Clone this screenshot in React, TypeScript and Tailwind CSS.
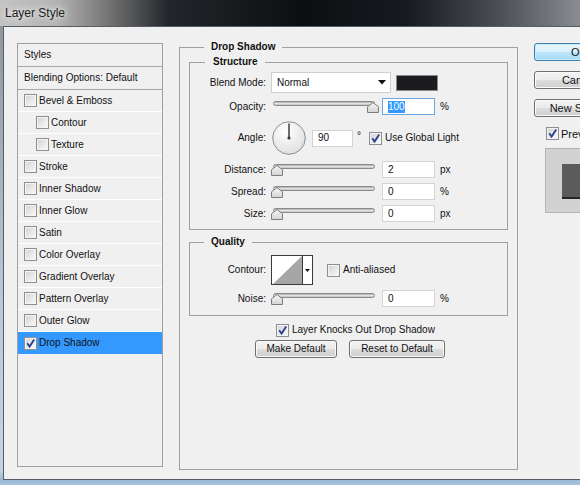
import React from "react";

function Check({ checked = false }: { checked?: boolean }) {
  return (
    <span className="relative flex h-[13px] w-[13px] shrink-0 items-center justify-center border border-[#8f8f8f] bg-gradient-to-br from-[#d2d2d2] to-[#fbfbfb] shadow-[inset_0_0_0_1px_#f4f4f4]">
      {checked && (
        <svg width="11" height="11" viewBox="0 0 11 11" className="absolute left-0 top-0">
          <path d="M2.2 5.2 L4.6 8.6 L9.2 1.6" fill="none" stroke="#2c428c" strokeWidth="1.9" />
        </svg>
      )}
    </span>
  );
}

function Field({ children, w, focused = false }: { children: React.ReactNode; w: string; focused?: boolean }) {
  return (
    <div
      className={`flex h-[17px] shrink-0 items-center border bg-white pl-[5px] ${
        focused ? "border-[#6fa6de]" : "border-[#d3d3d3]"
      } ${w}`}
    >
      {children}
    </div>
  );
}

function Slider({ max = false }: { max?: boolean }) {
  return (
    <div className="relative ml-[5px] h-[17px] w-[111px] shrink-0">
      <div className="absolute left-[2px] top-[3px] h-[5px] w-[102px] rounded-full border border-[#8b8b8b] bg-gradient-to-b from-[#a8a8a8] via-[#e3e3e3] to-[#c2c2c2]" />
      <svg
        width="12"
        height="11"
        viewBox="0 0 12 11"
        className={`absolute top-[4px] ${max ? "left-[96px]" : "left-0"}`}
      >
        <defs>
          <linearGradient id="thumbg" x1="0" y1="0" x2="0" y2="1">
            <stop offset="0" stopColor="#f6f6f6" />
            <stop offset="1" stopColor="#d4d4d4" />
          </linearGradient>
        </defs>
        <polygon points="6,0.5 11.5,4.8 11.5,10.5 0.5,10.5 0.5,4.8" fill="url(#thumbg)" stroke="#7d7d7d" />
      </svg>
    </div>
  );
}

function Label({ children }: { children: React.ReactNode }) {
  return <div className="w-[76px] shrink-0 text-right">{children}</div>;
}

function SliderRow({
  label,
  value,
  unit,
  max = false,
  focused = false,
  mt,
}: {
  label: string;
  value: string;
  unit: string;
  max?: boolean;
  focused?: boolean;
  mt: string;
}) {
  return (
    <div className={`flex h-[17px] items-center ${mt}`}>
      <Label>{label}</Label>
      <Slider max={max} />
      <Field w="w-[53px]" focused={focused}>
        {focused ? <span className="bg-[#3399ff] text-white">{value}</span> : value}
      </Field>
      <span className="ml-[5px]">{unit}</span>
    </div>
  );
}

function WinButton({ children, w, primary = false }: { children: React.ReactNode; w: string; primary?: boolean }) {
  return (
    <div
      className={`flex h-[18px] shrink-0 items-center justify-center rounded-[3px] border ${
        primary
          ? "border-[#3c7fb1] bg-[linear-gradient(to_bottom,#eaf6fd_0%,#d9f0fc_50%,#bee6fd_50%,#a7d9f5_100%)] shadow-[inset_0_0_0_1px_#c8ecfb]"
          : "border-[#707070] bg-[linear-gradient(to_bottom,#f2f2f2_0%,#ebebeb_50%,#dddddd_50%,#cfcfcf_100%)] shadow-[inset_0_0_0_1px_#fbfbfb]"
      } ${w}`}
    >
      {children}
    </div>
  );
}

const leftRows: { name: string; nested?: boolean; checked?: boolean; selected?: boolean }[] = [
  { name: "Bevel & Emboss" },
  { name: "Contour", nested: true },
  { name: "Texture", nested: true },
  { name: "Stroke" },
  { name: "Inner Shadow" },
  { name: "Inner Glow" },
  { name: "Satin" },
  { name: "Color Overlay" },
  { name: "Gradient Overlay" },
  { name: "Pattern Overlay" },
  { name: "Outer Glow" },
  { name: "Drop Shadow", checked: true, selected: true },
];

export default function App() {
  return (
    <div className="flex h-[485px] w-[580px] flex-col overflow-hidden bg-[linear-gradient(to_bottom,#8e9196_0px,#b9c9d9_300px,#c4d3e2_470px,#9cb8d6_480px,#a9c2dc_485px)] font-['Liberation_Sans',Arial,sans-serif] text-[10px] leading-[12px] text-[#111]">
      {/* Title bar */}
      <div className="flex h-[26px] shrink-0 items-center bg-[linear-gradient(to_right,#c4c4c4_0%,#b3b3b3_10%,#6a6a6a_20%,#22262a_29%,#0c0f12_52%,#161a1e_70%,#4b4f54_86%,#898c90_100%)] pl-[5px]">
        <span className="text-[12px] text-[#1b1b1b] [text-shadow:0_0_8px_#ffffff,0_0_4px_#e8e8e8]">Layer Style</span>
      </div>

      {/* Content */}
      <div className="ml-[3px] flex h-[454px] shrink-0 items-start overflow-hidden border border-r-0 border-[#575d66] bg-[#f0f0f0] pl-[13px]">
        {/* Left list */}
        <div className="mt-[16px] h-[424px] w-[146px] shrink-0 border border-[#a0a0a0] bg-[#f0f0f0]">
          <div className="flex h-[23px] items-center border-b border-[#a6a6a6] pl-[6px]">Styles</div>
          <div className="flex h-[23px] items-center border-b border-[#a6a6a6] pl-[6px]">Blending Options: Default</div>
          {leftRows.map((r) => (
            <div
              key={r.name}
              className={`flex h-[22px] items-center ${r.selected ? "bg-[#3399ff]" : "border-b border-white"} ${
                r.nested ? "pl-[18px]" : "pl-[6px]"
              }`}
            >
              <Check checked={r.checked} />
              <span className="ml-[2px]">{r.name}</span>
            </div>
          ))}
        </div>

        {/* Drop Shadow group */}
        <fieldset className="m-0 ml-[16px] mt-[14px] h-[429px] w-[339px] min-w-0 shrink-0 border border-[#a0a0a0] px-[9px] pb-0 pt-0">
          <legend className="ml-[15px] px-[7px] text-[10px] font-bold leading-[12px]">Drop Shadow</legend>

          {/* Structure */}
          <fieldset className="m-0 mt-[3px] min-w-0 border border-[#a0a0a0] px-0 pb-[7px] pt-[4px]">
            <legend className="ml-[15px] px-[8px] font-bold leading-[12px]">Structure</legend>

            <div className="flex h-[21px] items-center">
              <Label>Blend Mode:</Label>
              <div className="ml-[5px] flex h-[21px] w-[120px] shrink-0 items-center justify-between border border-[#cfcfcf] bg-white pl-[5px] pr-[4px]">
                <span>Normal</span>
                <svg width="8" height="5" viewBox="0 0 8 5">
                  <polygon points="0,0 8,0 4,4.5" fill="#111" />
                </svg>
              </div>
              <div className="ml-[5px] h-[16px] w-[42px] shrink-0 border border-[#8a8a8a] bg-[#1c1b20]" />
            </div>

            <SliderRow label="Opacity:" value="100" unit="%" max focused mt="mt-[5px]" />

            <div className="mt-[6px] flex h-[34px] items-center">
              <Label>Angle:</Label>
              <div className="ml-[6px] h-[34px] w-[34px] shrink-0">
                <svg width="34" height="34" viewBox="0 0 34 34">
                  <defs>
                    <radialGradient id="dialg" cx="0.4" cy="0.3" r="0.8">
                      <stop offset="0" stopColor="#ffffff" />
                      <stop offset="1" stopColor="#dcdcdc" />
                    </radialGradient>
                  </defs>
                  <circle cx="17" cy="17" r="16.3" fill="url(#dialg)" stroke="#8c8c8c" strokeWidth="1" />
                  <line x1="17" y1="17" x2="17" y2="2.5" stroke="#4a4a4a" strokeWidth="1.6" />
                  <circle cx="17" cy="17" r="1.6" fill="#3a3a3a" />
                </svg>
              </div>
              <div className="ml-[6px]">
                <Field w="w-[41px]">90</Field>
              </div>
              <span className="ml-[4px] self-start pt-[9px] text-[10px]">°</span>
              <div className="ml-[8px] flex items-center">
                <Check checked />
                <span className="ml-[3px]">Use Global Light</span>
              </div>
            </div>

            <SliderRow label="Distance:" value="2" unit="px" mt="mt-[6px]" />
            <SliderRow label="Spread:" value="0" unit="%" mt="mt-[5px]" />
            <SliderRow label="Size:" value="0" unit="px" mt="mt-[5px]" />
          </fieldset>

          {/* Quality */}
          <fieldset className="m-0 mt-[6px] min-w-0 border border-[#a0a0a0] px-0 pb-[8px] pt-[7px]">
            <legend className="ml-[14px] px-[7px] font-bold leading-[12px]">Quality</legend>
            <div className="flex h-[30px] items-center">
              <Label>Contour:</Label>
              <div className="ml-[5px] flex h-[30px] w-[42px] shrink-0 border border-[#3a3a3a] bg-white">
                <svg width="30" height="28" viewBox="0 0 30 28" className="block shrink-0">
                  <polygon points="1,28 30,0 30,28" fill="#a6a6a6" />
                </svg>
                <div className="flex flex-1 items-center justify-center border-l border-[#3a3a3a]">
                  <svg width="5" height="3" viewBox="0 0 5 3">
                    <polygon points="0,0 5,0 2.5,3" fill="#111" />
                  </svg>
                </div>
              </div>
              <div className="ml-[14px] flex items-center">
                <Check />
                <span className="ml-[3px]">Anti-aliased</span>
              </div>
            </div>
            <SliderRow label="Noise:" value="0" unit="%" mt="mt-[5px]" />
          </fieldset>

          <div className="mt-[6px] flex h-[16px] items-center pl-[87px]">
            <Check checked />
            <span className="ml-[3px]">Layer Knocks Out Drop Shadow</span>
          </div>
          <div className="mt-[2px] flex pl-[66px]">
            <WinButton w="w-[82px]">Make Default</WinButton>
            <div className="ml-[12px]">
              <WinButton w="w-[96px]">Reset to Default</WinButton>
            </div>
          </div>
        </fieldset>

        {/* Right column */}
        <div className="ml-[16px] mt-[16px] flex w-[100px] shrink-0 flex-col text-[11px]">
          <WinButton w="w-[90px]" primary>
            OK
          </WinButton>
          <div className="mt-[10px]">
            <WinButton w="w-[90px]">Cancel</WinButton>
          </div>
          <div className="mt-[10px]">
            <WinButton w="w-[90px]">New Style...</WinButton>
          </div>
          <div className="ml-[12px] mt-[10px] flex h-[13px] items-center">
            <Check checked />
            <span className="ml-[2px]">Preview</span>
          </div>
          <div className="ml-[11px] mt-[8px] h-[65px] w-[80px] border border-[#b4b4b4] bg-[#d2d2d2] pl-[16px] pt-[15px]">
            <div className="h-[35px] w-[60px] border-b-2 border-[#262626] bg-[#5b5b5b]" />
          </div>
        </div>
      </div>
    </div>
  );
}
